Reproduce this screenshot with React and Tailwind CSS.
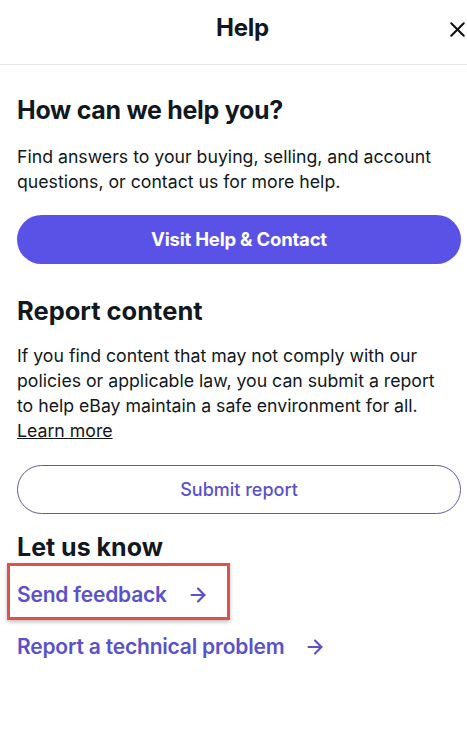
import { X, ArrowRight } from 'lucide-react';

export default function App() {
  return (
    <div className="w-[467px] h-[733px] bg-white text-[#111820] overflow-hidden" style={{ fontFamily: 'Inter, "Liberation Sans", sans-serif' }}>
      <div className="h-[65px] border-b border-[#e5e5e5] relative flex justify-center pt-[13px] pl-[18px]">
        <h2 className="text-[24px] leading-[30px] font-bold tracking-[-0.2px]">Help</h2>
        <button className="absolute right-[-3px] top-[17px] text-[#111]">
          <X className="w-[25px] h-[25px]" strokeWidth={2} />
        </button>
      </div>

      <div className="px-[17px] pt-[28px]">
        <h3 className="text-[25px] font-bold leading-[34px] tracking-[-0.3px]">How can we help you?</h3>
        <p className="mt-[17px] text-[17.7px] leading-[25px]">
          Find answers to your buying, selling, and account questions, or contact us for more help.
        </p>
        <button className="mt-[21px] w-[444px] h-[49px] rounded-full bg-[#5a52e6] text-white text-[18.5px] font-bold tracking-[-0.2px]">
          Visit Help &amp; Contact
        </button>

        <h3 className="mt-[30px] text-[25.5px] font-bold leading-[34px]">Report content</h3>
        <p className="mt-[15px] text-[17.7px] leading-[25px]">
          If you find content that may not comply with our policies or applicable law, you can submit a report to help eBay maintain a safe environment for all.
          <br />
          <a href="#" className="underline">Learn more</a>
        </p>
        <button className="mt-[22px] w-[444px] h-[49px] rounded-full border border-[#5e5ba0] text-[#5a52c9] text-[18px] font-medium">
          Submit report
        </button>

        <h3 className="mt-[17px] text-[25px] font-bold leading-[32px]">Let us know</h3>
        <div className="-mx-[10px] w-[223px] h-[57px] border-[3px] border-[#d9534f] shadow-[0_2px_4px_rgba(0,0,0,0.25)] flex items-center pl-[7px] pt-[7px]">
          <a href="#" className="flex items-center gap-[20px] text-[#5a52c9] text-[21px] font-semibold tracking-[-0.2px]">
            Send feedback
            <ArrowRight className="w-[22px] h-[22px]" strokeWidth={2.4} />
          </a>
        </div>
        <a href="#" className="mt-[11px] flex items-center gap-[20px] text-[#5a52c9] text-[21px] font-semibold tracking-[-0.2px]">
          Report a technical problem
          <ArrowRight className="w-[22px] h-[22px]" strokeWidth={2.4} />
        </a>
      </div>
    </div>
  );
}
